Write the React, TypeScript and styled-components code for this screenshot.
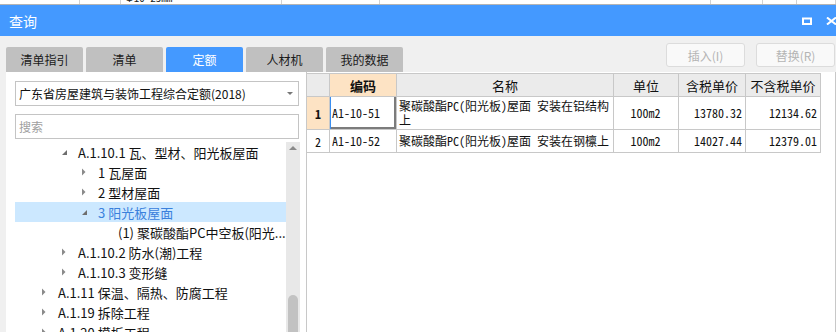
import React from 'react';
import styled, { createGlobalStyle } from 'styled-components';

interface TreeNode {
    level: number;
    label: string;
    toggle?: 'open' | 'closed';
    selected?: boolean;
}

interface QuotaRow {
    no: number;
    code: string;
    name: string;
    unit: string;
    taxPrice: string;
    netPrice: string;
    tall?: boolean;
}

const GlobalStyle = createGlobalStyle`
    html, body {
        margin: 0;
        padding: 0;
        overflow: hidden;
    }
    body {
        font-family: "Noto Sans CJK SC", "Noto Sans", sans-serif;
        background: #f0f0f0;
        color: #111;
    }
`;

const Page = styled.div`
    width: 836px;
    height: 332px;
    overflow: hidden;
    display: flex;
    flex-direction: column;
    background: #f0f0f0;
`;

const BackSheet = styled.div`
    height: 4px;
    flex-shrink: 0;
    display: flex;
    background: #fff;
    border-bottom: 1px solid #b4b4b4;
`;

const BackCell = styled.div<{ $w: number }>`
    width: ${p => p.$w}px;
    box-sizing: border-box;
    border-right: 1px solid #d2d2d2;
    overflow: hidden;
    padding-left: 4px;
`;

const BackText = styled.div`
    margin-top: -9px;
    font: 11px/12px "Noto Sans Mono CJK SC", "Liberation Mono", monospace;
    color: #222;
`;

const TitleBar = styled.div`
    height: 31px;
    flex-shrink: 0;
    display: flex;
    align-items: center;
    padding-left: 9px;
    background: #4499ff;
    color: #fff;
    font-size: 14px;
`;

const TitleText = styled.span`
    flex: 1;
`;

const WinButtons = styled.div`
    display: flex;
    align-items: center;
    gap: 14px;
    margin-right: -1px;
`;

const Toolbar = styled.div`
    height: 36px;
    flex-shrink: 0;
    display: flex;
    padding-left: 6px;
`;

const Tabs = styled.div`
    align-self: flex-end;
    display: flex;
    gap: 3px;
`;

const Tab = styled.div<{ $active?: boolean }>`
    width: 77px;
    height: 25px;
    display: flex;
    align-items: center;
    justify-content: center;
    border-radius: 2px 2px 0 0;
    font-size: 12px;
    background: ${p => (p.$active ? '#4499ff' : '#c0c0c0')};
    color: ${p => (p.$active ? '#fff' : '#1a1a1a')};
`;

const Actions = styled.div`
    margin-left: auto;
    margin-top: 7px;
    display: flex;
    gap: 11px;
    padding-right: 1px;
`;

const ActionButton = styled.div`
    width: 79px;
    height: 24px;
    box-sizing: border-box;
    display: flex;
    align-items: center;
    justify-content: center;
    border: 1px solid #dcdcdc;
    border-radius: 3px;
    background: #f9f9f9;
    color: #b4b4b4;
    font-size: 12px;
`;

const Main = styled.div`
    flex: 1;
    min-height: 0;
    display: flex;
    padding-left: 6px;
`;

const LeftPanel = styled.div`
    width: 291px;
    flex-shrink: 0;
    display: flex;
    flex-direction: column;
    background: #fff;
    padding: 9px 0 0 9px;
`;

const Select = styled.div`
    width: 284px;
    height: 25px;
    flex-shrink: 0;
    box-sizing: border-box;
    display: flex;
    align-items: center;
    padding: 0 5px 0 3px;
    border: 1px solid #c4c4c4;
    font-size: 12px;
`;

const SelectText = styled.span`
    flex: 1;
`;

const SelectArrow = styled.span`
    width: 0;
    height: 0;
    border-left: 3px solid transparent;
    border-right: 3px solid transparent;
    border-top: 3px solid #777;
`;

const Search = styled.div`
    margin-top: 8px;
    width: 284px;
    height: 25px;
    flex-shrink: 0;
    box-sizing: border-box;
    display: flex;
    align-items: center;
    padding-left: 3px;
    border: 1px solid #c4c4c4;
    font-size: 12px;
    color: #a0a0a0;
`;

const TreeArea = styled.div`
    margin-top: 3px;
    display: flex;
    flex-shrink: 0;
`;

const TreeList = styled.div`
    width: 271px;
`;

const TreeRow = styled.div<{ $level: number; $selected?: boolean }>`
    height: 20px;
    display: flex;
    align-items: center;
    padding-left: ${p => 21 + (p.$level - 1) * 20}px;
    background: ${p => (p.$selected ? '#cce8ff' : 'transparent')};
    color: ${p => (p.$selected ? '#3a80dc' : '#111')};
    font-size: 13px;
    white-space: nowrap;
`;

const Toggle = styled.span`
    width: 16px;
    height: 16px;
    flex-shrink: 0;
    display: flex;
`;

const TreeLabel = styled.span`
    margin-left: 6px;
`;

const ScrollTrack = styled.div`
    width: 14px;
    display: flex;
    flex-direction: column;
    align-items: center;
    background: #e8e8e8;
`;

const ScrollUp = styled.span`
    margin-top: 4px;
    width: 0;
    height: 0;
    border-left: 4px solid transparent;
    border-right: 4px solid transparent;
    border-bottom: 4px solid #8a8a8a;
`;

const ScrollThumb = styled.div`
    margin-top: 145px;
    width: 10px;
    height: 60px;
    border-radius: 5px 5px 0 0;
    background: #c2c2c2;
`;

const RightPanel = styled.div`
    flex: 1;
    background: #fff;
    border-left: 1px solid #c8c8c8;
    border-right: 1px solid #c8c8c8;
`;

const Grid = styled.table`
    border-collapse: collapse;
    table-layout: fixed;
    margin-top: 1px;
    margin-left: -1px;
    font-family: "Noto Sans Mono CJK SC", "Noto Sans CJK SC", monospace;
    font-size: 12px;
    color: #111;
`;

const Head = styled.th<{ $hot?: boolean }>`
    height: 22px;
    padding: 0;
    border: 1px solid #c8c8c8;
    background: ${p => (p.$hot ? '#fde3c4' : '#ebebeb')};
    font-family: "Noto Sans CJK SC", sans-serif;
    font-size: 13px;
    font-weight: ${p => (p.$hot ? 700 : 400)};
    color: #111;
`;

const RowHead = styled.td<{ $hot?: boolean }>`
    padding: 0;
    border: 1px solid #c8c8c8;
    text-align: center;
    background: ${p => (p.$hot ? '#fde3c4' : '#fff')};
    font-weight: ${p => (p.$hot ? 700 : 400)};
`;

const Cell = styled.td<{ $align?: 'left' | 'center' | 'right'; $focus?: boolean }>`
    padding: 0 3px 0 2px;
    border: 1px solid #c8c8c8;
    line-height: 14px;
    text-align: ${p => p.$align || 'left'};
    vertical-align: middle;
    word-break: break-all;
    box-shadow: ${p => (p.$focus ? 'inset 1px 0 0 #3a8ef0, inset -2px -2px 0 #7c7c7c' : 'none')};
`;

const Row = styled.tr<{ $tall?: boolean }>`
    height: ${p => (p.$tall ? 33 : 23)}px;
`;

const tabs = ['清单指引', '清单', '定额', '人材机', '我的数据'];

const tree: TreeNode[] = [
    { level: 2, label: 'A.1.10.1 瓦、型材、阳光板屋面', toggle: 'open' },
    { level: 3, label: '1 瓦屋面', toggle: 'closed' },
    { level: 3, label: '2 型材屋面', toggle: 'closed' },
    { level: 3, label: '3 阳光板屋面', toggle: 'open', selected: true },
    { level: 4, label: '(1) 聚碳酸酯PC中空板(阳光...' },
    { level: 2, label: 'A.1.10.2 防水(潮)工程', toggle: 'closed' },
    { level: 2, label: 'A.1.10.3 变形缝', toggle: 'closed' },
    { level: 1, label: 'A.1.11 保温、隔热、防腐工程', toggle: 'closed' },
    { level: 1, label: 'A.1.19 拆除工程', toggle: 'closed' },
    { level: 1, label: 'A.1.20 模板工程', toggle: 'closed' },
];

const rows: QuotaRow[] = [
    {
        no: 1,
        code: 'A1-10-51',
        name: '聚碳酸酯PC(阳光板)屋面 安装在铝结构上',
        unit: '100m2',
        taxPrice: '13780.32',
        netPrice: '12134.62',
        tall: true,
    },
    {
        no: 2,
        code: 'A1-10-52',
        name: '聚碳酸酯PC(阳光板)屋面 安装在钢檩上',
        unit: '100m2',
        taxPrice: '14027.44',
        netPrice: '12379.01',
    },
];

const backCells = [80, 41, 161, 98, 331, 52, 34, 39];

const ToggleIcon: React.FC<{ kind?: 'open' | 'closed' }> = ({ kind }) => (
    <Toggle>
        {kind === 'open' && (
            <svg width="16" height="16" viewBox="0 0 16 16">
                <polygon points="11,6 11,11 6,11" fill="#6e6e6e" />
            </svg>
        )}
        {kind === 'closed' && (
            <svg width="16" height="16" viewBox="0 0 16 16">
                <polygon points="6,4.5 9.5,8 6,11.5" fill="#8a8a8a" />
            </svg>
        )}
    </Toggle>
);

const App: React.FC = () => {
    return (
        <>
            <GlobalStyle />
            <Page>
                <BackSheet>
                    {backCells.map((w, i) => (
                        <BackCell key={i} $w={w}>
                            {i === 2 && <BackText>Φ10-25mm</BackText>}
                        </BackCell>
                    ))}
                </BackSheet>

                <TitleBar>
                    <TitleText>查询</TitleText>
                    <WinButtons>
                        <svg width="10" height="8" viewBox="0 0 10 8">
                            <rect x="1" y="1.5" width="8" height="5.5" fill="none" stroke="#fff" strokeWidth="2" />
                        </svg>
                        <svg width="11" height="8" viewBox="0 0 11 8">
                            <path d="M1 0.5 L10 7.5 M10 0.5 L1 7.5" stroke="#fff" strokeWidth="2" />
                        </svg>
                    </WinButtons>
                </TitleBar>

                <Toolbar>
                    <Tabs>
                        {tabs.map(t => (
                            <Tab key={t} $active={t === '定额'}>{t}</Tab>
                        ))}
                    </Tabs>
                    <Actions>
                        <ActionButton>插入(I)</ActionButton>
                        <ActionButton>替换(R)</ActionButton>
                    </Actions>
                </Toolbar>

                <Main>
                    <LeftPanel>
                        <Select>
                            <SelectText>广东省房屋建筑与装饰工程综合定额(2018)</SelectText>
                            <SelectArrow />
                        </Select>
                        <Search>搜索</Search>
                        <TreeArea>
                            <TreeList>
                                {tree.map((n, i) => (
                                    <TreeRow key={i} $level={n.level} $selected={n.selected}>
                                        <ToggleIcon kind={n.toggle} />
                                        <TreeLabel>{n.label}</TreeLabel>
                                    </TreeRow>
                                ))}
                            </TreeList>
                            <ScrollTrack>
                                <ScrollUp />
                                <ScrollThumb />
                            </ScrollTrack>
                        </TreeArea>
                    </LeftPanel>

                    <RightPanel>
                        <Grid>
                            <colgroup>
                                <col style={{ width: 23 }} />
                                <col style={{ width: 67 }} />
                                <col style={{ width: 217 }} />
                                <col style={{ width: 65 }} />
                                <col style={{ width: 67 }} />
                                <col style={{ width: 75 }} />
                            </colgroup>
                            <thead>
                                <tr>
                                    <Head />
                                    <Head $hot>编码</Head>
                                    <Head>名称</Head>
                                    <Head>单位</Head>
                                    <Head>含税单价</Head>
                                    <Head>不含税单价</Head>
                                </tr>
                            </thead>
                            <tbody>
                                {rows.map(r => (
                                    <Row key={r.no} $tall={r.tall}>
                                        <RowHead $hot={r.no === 1}>{r.no}</RowHead>
                                        <Cell $focus={r.no === 1}>{r.code}</Cell>
                                        <Cell>{r.name}</Cell>
                                        <Cell $align="center">{r.unit}</Cell>
                                        <Cell $align="right">{r.taxPrice}</Cell>
                                        <Cell $align="right">{r.netPrice}</Cell>
                                    </Row>
                                ))}
                            </tbody>
                        </Grid>
                    </RightPanel>
                </Main>
            </Page>
        </>
    );
};

export default App;
